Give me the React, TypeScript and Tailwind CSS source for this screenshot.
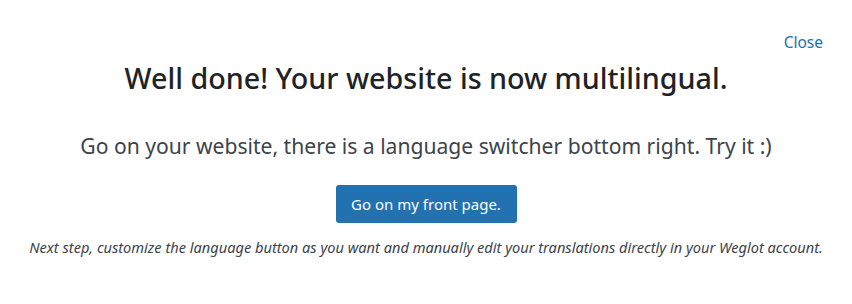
export default function App() {
  return (
    <div
      className="w-[852px] h-[304px] bg-white flex flex-col"
      style={{ fontFamily: '"Noto Sans", "Open Sans", sans-serif' }}
    >
      <div className="flex justify-end pr-[29px] pt-[32px]">
        <a href="#" className="text-[15.5px] leading-[20px] text-[#2271b1]">
          Close
        </a>
      </div>
      <h2 className="mt-[8px] text-center text-[28.7px] leading-[36px] font-medium text-[#1d2327]">
        Well done! Your website is now multilingual.
      </h2>
      <p className="mt-[36px] text-center text-[21.1px] leading-[28px] text-[#3c434a]">
        Go on your website, there is a language switcher bottom right. Try it :)
      </p>
      <div className="mt-[25px] flex justify-center">
        <button className="h-[38px] w-[181px] rounded-[3px] bg-[#2271b1] text-white text-[15px]">
          Go on my front page.
        </button>
      </div>
      <p className="mt-[14px] text-center text-[14.6px] leading-[20px] italic text-[#3c434a]">
        Next step, customize the language button as you want and manually edit your translations directly in your Weglot account.
      </p>
    </div>
  );
}
